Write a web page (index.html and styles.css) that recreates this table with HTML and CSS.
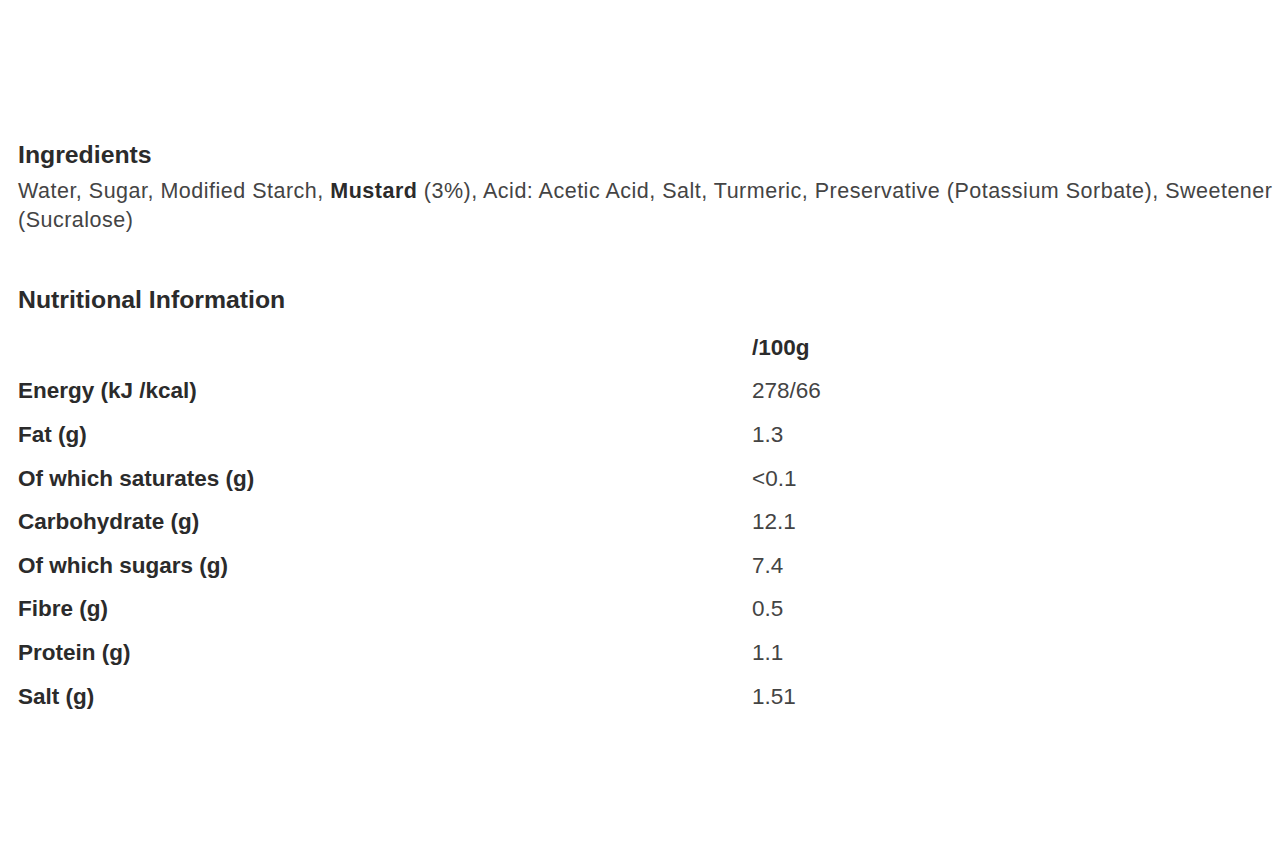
FILE: index.html
```html
<!DOCTYPE html>
<html lang="en">
<head>
<meta charset="utf-8">
<title>Product information</title>
<link rel="stylesheet" href="styles.css">
</head>
<body>
<main class="page">
  <section class="block ingredients">
    <h2 class="block-title">Ingredients</h2>
    <p class="ingredients-text">Water, Sugar, Modified Starch, <strong>Mustard</strong> (3%), Acid: Acetic Acid, Salt, Turmeric, Preservative (Potassium Sorbate), Sweetener (Sucralose)</p>
  </section>
  <section class="block nutrition">
    <h2 class="block-title">Nutritional Information</h2>
    <div class="nutri-table">
      <div class="nutri-row head"><span class="label"></span><span class="value">/100g</span></div>
      <div class="nutri-row"><span class="label">Energy (kJ /kcal)</span><span class="value">278/66</span></div>
      <div class="nutri-row"><span class="label">Fat (g)</span><span class="value">1.3</span></div>
      <div class="nutri-row"><span class="label">Of which saturates (g)</span><span class="value">&lt;0.1</span></div>
      <div class="nutri-row"><span class="label">Carbohydrate (g)</span><span class="value">12.1</span></div>
      <div class="nutri-row"><span class="label">Of which sugars (g)</span><span class="value">7.4</span></div>
      <div class="nutri-row"><span class="label">Fibre (g)</span><span class="value">0.5</span></div>
      <div class="nutri-row"><span class="label">Protein (g)</span><span class="value">1.1</span></div>
      <div class="nutri-row"><span class="label">Salt (g)</span><span class="value">1.51</span></div>
    </div>
  </section>
</main>
</body>
</html>
```
FILE: styles.css
```css
* { box-sizing: border-box; }
html, body { margin: 0; padding: 0; background: #fff; }
body {
  font-family: "Liberation Sans", Arial, sans-serif;
  color: #333;
}
.page {
  padding: 140px 0 0 18px;
  width: 1280px;
}
.block-title {
  margin: 0;
  font-size: 24.8px;
  font-weight: bold;
  line-height: 30px;
  color: #2b2b2b;
}
.ingredients-text {
  margin: 7px 0 0 0;
  font-size: 21.5px;
  line-height: 29px;
  letter-spacing: 0.5px;
  color: #444;
}
.ingredients-text strong { color: #2b2b2b; }
.nutrition { margin-top: 50px; }
.nutri-table {
  display: flex;
  flex-direction: column;
  margin-top: 11px;
}
.nutri-row {
  display: grid;
  grid-template-columns: 734px 1fr;
  height: 43.6px;
  align-items: center;
  font-size: 22.5px;
}
.label { font-weight: bold; color: #2b2b2b; }
.value { color: #444; }
.head .value { font-weight: bold; color: #2b2b2b; }
```
